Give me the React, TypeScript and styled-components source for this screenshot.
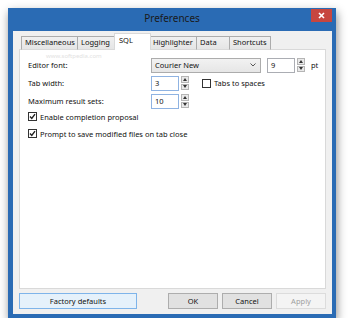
import React from "react";
import styled, { createGlobalStyle } from "styled-components";

const GlobalStyle = createGlobalStyle`
	body {
		margin: 0;
		background: #ffffff;
		font-family: "Noto Sans", "Open Sans", sans-serif;
		font-size: 7.5px;
		color: #111111;
	}
`;

const Window = styled.div`
	margin: 8px 0 0 8px;
	width: 328px;
	height: 310px;
	background: #2a6bb4;
	box-shadow: 1px 4px 9px rgba(0, 0, 0, 0.45);
	display: flex;
	flex-direction: column;
`;

const TitleBar = styled.div`
	height: 23px;
	display: grid;
	grid-template-columns: 1fr auto 1fr;
	align-items: start;
`;

const Title = styled.div`
	grid-column: 2;
	font-size: 10px;
	line-height: 21px;
	color: #1a1a1a;
`;

const CloseButton = styled.div`
	grid-column: 3;
	justify-self: end;
	margin: 1px 4px 0 0;
	width: 21px;
	height: 13px;
	background: #c7463f;
	display: flex;
	align-items: center;
	justify-content: center;
`;

const Client = styled.div`
	flex: 1;
	margin: 0 4px 4px 5px;
	background: #f0f0f0;
	padding: 2px 6px 5px 6px;
	display: flex;
	flex-direction: column;
`;

const TabStrip = styled.div`
	display: flex;
	align-items: flex-end;
	height: 17px;
	padding-left: 3px;
	margin-bottom: -1px;
	position: relative;
	z-index: 1;
`;

const Tab = styled.div<{ $active?: boolean; $w: number }>`
	box-sizing: border-box;
	width: ${(p) => p.$w}px;
	height: ${(p) => (p.$active ? 17 : 14)}px;
	margin-left: ${(p) => (p.$active ? -2 : -1)}px;
	margin-right: ${(p) => (p.$active ? -1 : 0)}px;
	border: 1px solid ${(p) => (p.$active ? "#d9d9d9" : "#acacac")};
	border-bottom: ${(p) => (p.$active ? "none" : "1px solid #d9d9d9")};
	background: ${(p) => (p.$active ? "#ffffff" : "linear-gradient(#f0f0f0, #e5e5e5)")};
	padding: ${(p) => (p.$active ? "1px 0 0 4px" : "0 0 0 3px")};
	line-height: 11px;
	position: relative;
	z-index: ${(p) => (p.$active ? 1 : 0)};
	white-space: nowrap;
`;

const Panel = styled.div`
	flex: 1;
	background: #ffffff;
	border: 1px solid #d9d9d9;
	padding: 7px 8px;
	position: relative;
`;

const Watermark = styled.div`
	position: absolute;
	left: 26px;
	top: 2px;
	font-size: 6px;
	color: #e2e2e2;
`;

const FormGrid = styled.div`
	display: grid;
	grid-template-columns: 123px auto;
	row-gap: 2px;
	align-items: center;
`;

const Label = styled.div`
	line-height: 16px;
`;

const Controls = styled.div`
	display: flex;
	align-items: center;
	height: 16px;
`;

const Combo = styled.div`
	box-sizing: border-box;
	width: 110px;
	height: 15px;
	border: 1px solid #acacac;
	background: linear-gradient(#f2f2f2, #e6e6e6);
	display: flex;
	align-items: center;
	justify-content: space-between;
	padding: 0 4px 0 3px;
	margin-right: 6px;
`;

const Spin = styled.div`
	display: flex;
	align-items: center;
	gap: 2px;
`;

const SpinEdit = styled.div<{ $focus?: boolean; $w: number }>`
	box-sizing: border-box;
	width: ${(p) => p.$w}px;
	height: 15px;
	border: 1px solid ${(p) => (p.$focus ? "#8fb3e2" : "#abadb3")};
	background: #ffffff;
	padding-left: 3px;
	line-height: 13px;
`;

const SpinArrows = styled.div`
	box-sizing: border-box;
	width: 8px;
	height: 14px;
	display: flex;
	flex-direction: column;
	gap: 1px;
`;

const SpinArrow = styled.div`
	flex: 1;
	border: 1px solid #b5b5b5;
	background: #e9e9e9;
	display: flex;
	align-items: center;
	justify-content: center;
`;

const Unit = styled.span`
	margin-left: 6px;
`;

const CheckRow = styled.div<{ $inline?: boolean }>`
	display: flex;
	align-items: center;
	gap: 3px;
	font-size: 7.5px;
	height: ${(p) => (p.$inline ? "16px" : "17px")};
	margin-left: ${(p) => (p.$inline ? "13px" : "0")};
`;

const Box = styled.span`
	box-sizing: border-box;
	width: 9px;
	height: 9px;
	border: 1px solid #333333;
	background: #ffffff;
	display: flex;
	align-items: center;
	justify-content: center;
`;

const Checks = styled.div`
	margin-top: -1px;
	display: flex;
	flex-direction: column;
`;

const ButtonRow = styled.div`
	display: flex;
	align-items: center;
	margin-top: 4px;
	gap: 4px;
`;

const Button = styled.div<{ $w: number; $focus?: boolean; $disabled?: boolean }>`
	box-sizing: border-box;
	width: ${(p) => p.$w}px;
	height: 16px;
	border: 1px solid ${(p) => (p.$focus ? "#7eb4ea" : p.$disabled ? "#dcdcdc" : "#adadad")};
	background: ${(p) => (p.$disabled ? "#f4f4f4" : p.$focus ? "#e5f1fb" : "#e1e1e1")};
	color: ${(p) => (p.$disabled ? "#a0a0a0" : "#111111")};
	text-align: center;
	line-height: 14px;
`;

const Spacer = styled.div`
	flex: 1;
`;

const Up = () => (
	<svg width="4" height="3" viewBox="0 0 4 3">
		<path d="M0 3 L2 0 L4 3 Z" fill="#333" />
	</svg>
);

const Down = () => (
	<svg width="4" height="3" viewBox="0 0 4 3">
		<path d="M0 0 L2 3 L4 0 Z" fill="#333" />
	</svg>
);

const Check = () => (
	<svg width="7" height="7" viewBox="0 0 7 7">
		<path d="M1 3.5 L2.8 5.5 L6 1.2" stroke="#222" strokeWidth="1.4" fill="none" />
	</svg>
);

function SpinBox({ value, w, focus }: { value: string; w: number; focus?: boolean }) {
	return (
		<Spin>
			<SpinEdit $w={w} $focus={focus}>{value}</SpinEdit>
			<SpinArrows>
				<SpinArrow><Up /></SpinArrow>
				<SpinArrow><Down /></SpinArrow>
			</SpinArrows>
		</Spin>
	);
}

const tabs = [
	{ name: "Miscellaneous", w: 57 },
	{ name: "Logging", w: 39 },
	{ name: "SQL", w: 37, active: true },
	{ name: "Highlighter", w: 48 },
	{ name: "Data", w: 34 },
	{ name: "Shortcuts", w: 42 },
];

export default function App() {
	return (
		<>
			<GlobalStyle />
			<Window>
				<TitleBar>
					<Title>Preferences</Title>
					<CloseButton>
						<svg width="7" height="7" viewBox="0 0 7 7">
							<path d="M1 1 L6 6 M6 1 L1 6" stroke="#fff" strokeWidth="1.6" />
						</svg>
					</CloseButton>
				</TitleBar>
				<Client>
					<TabStrip>
						{tabs.map((t) => (
							<Tab key={t.name} $w={t.w} $active={t.active}>
								{t.name}
							</Tab>
						))}
					</TabStrip>
					<Panel>
						<Watermark>www.softpedia.com</Watermark>
						<FormGrid>
							<Label>Editor font:</Label>
							<Controls>
								<Combo>
									<span>Courier New</span>
									<svg width="6" height="4" viewBox="0 0 6 4">
										<path d="M0.5 0.5 L3 3 L5.5 0.5" stroke="#555" strokeWidth="1" fill="none" />
									</svg>
								</Combo>
								<SpinBox value="9" w={28} />
								<Unit>pt</Unit>
							</Controls>
							<Label>Tab width:</Label>
							<Controls>
								<SpinBox value="3" w={28} focus />
								<CheckRow $inline>
									<Box />
									Tabs to spaces
								</CheckRow>
							</Controls>
							<Label>Maximum result sets:</Label>
							<Controls>
								<SpinBox value="10" w={28} focus />
							</Controls>
						</FormGrid>
						<Checks>
							<CheckRow>
								<Box><Check /></Box>
								Enable completion proposal
							</CheckRow>
							<CheckRow>
								<Box><Check /></Box>
								Prompt to save modified files on tab close
							</CheckRow>
						</Checks>
					</Panel>
					<ButtonRow>
						<Button $w={118} $focus>Factory defaults</Button>
						<Spacer />
						<Button $w={50}>OK</Button>
						<Button $w={50}>Cancel</Button>
						<Button $w={50} $disabled>Apply</Button>
					</ButtonRow>
				</Client>
			</Window>
		</>
	);
}
